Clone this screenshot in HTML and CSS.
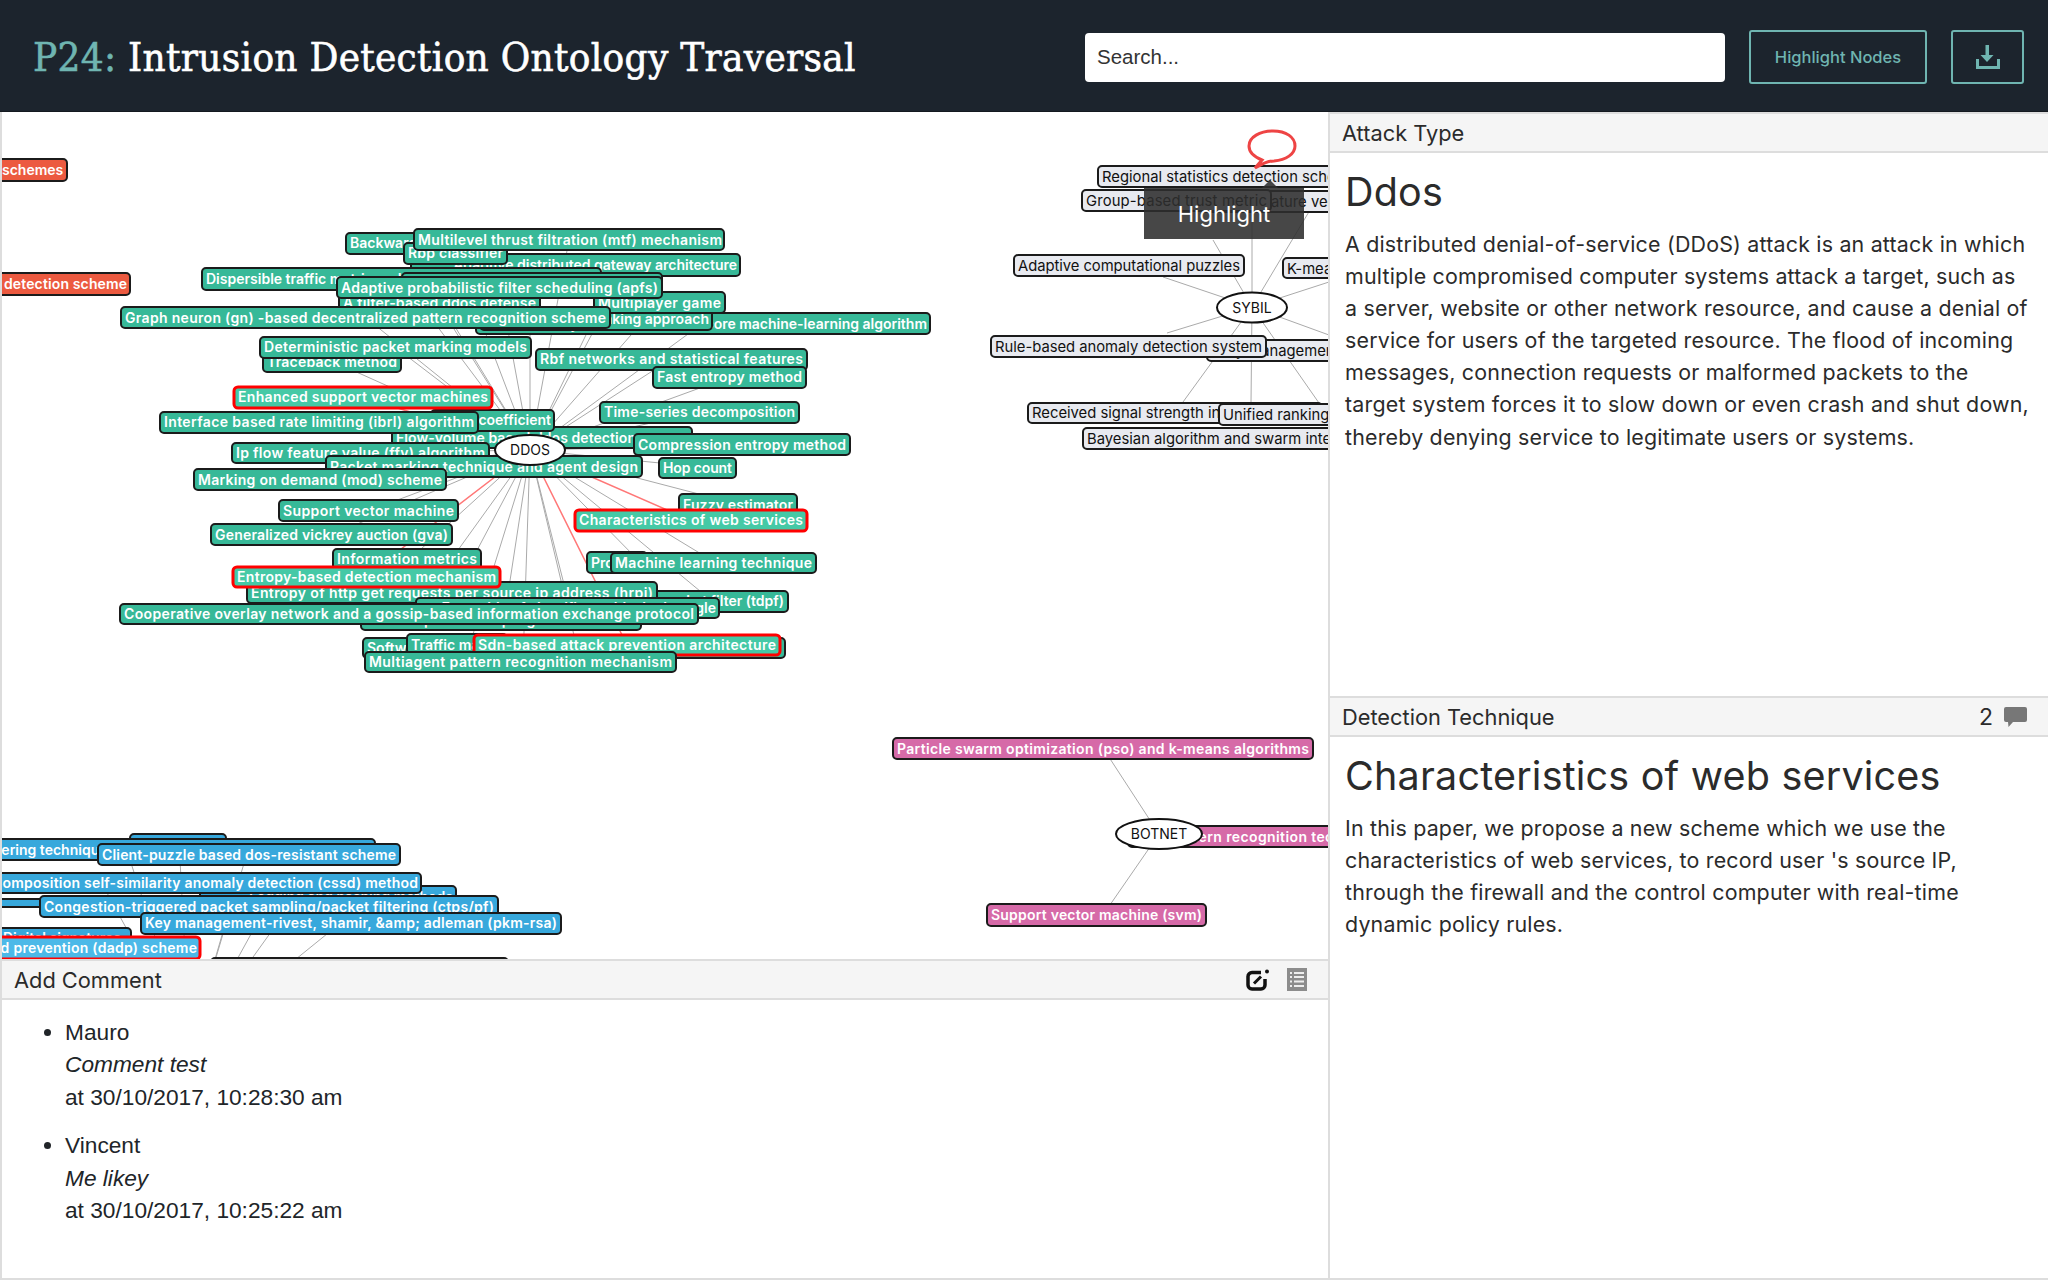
FILE: index.html
```html
<!DOCTYPE html>
<html lang="en">
<head>
<meta charset="utf-8">
<title>P24: Intrusion Detection Ontology Traversal</title>
<link rel="stylesheet" href="styles.css">
</head>
<body>
<header class="topbar">
  <h1 class="title"><span class="title-id">P24:</span> Intrusion Detection Ontology Traversal</h1>
  <div class="tools">
    <input class="search" type="text" placeholder="Search...">
    <button class="btn btn-text" type="button">Highlight Nodes</button>
    <button class="btn btn-icon" type="button" aria-label="Download">
      <svg class="icon-download" viewBox="0 0 24 25" width="24" height="25"><path d="M9.500 0h3.500v10h4.500l-6.500 7-6.500-7h5z"/><path class="tray" d="M1.500 14v8.500h21V14"/></svg>
    </button>
  </div>
</header>
<main class="layout">
  <section class="left">
    <div class="graph">
      <svg class="graph-svg" viewBox="2 112 1326 847" width="1326" height="847">
        <path class="edge" d="M530 450L400 243M530 450L569 240M530 450L455 253M530 450L620 265M530 450L401 278M530 450L530 283M530 450L500 287M530 450L440 302M530 450L660 302M530 450L365 317M530 450L600 319M530 450L703 323M530 450L395 347M530 450L332 361M530 450L671 359M530 450L730 377M530 450L320 422M530 450L492 420M530 450L700 412M530 450L745 445M530 450L363 453M530 450L700 467M530 450L323 480M530 450L371 510M530 450L741 505M530 450L334 534M530 450L410 559M530 450L640 562M530 450L716 563M530 450L455 592M530 450L712 601M530 450L570 608M530 450L412 614M530 450L504 620M530 450L577 648M530 450L470 644M530 450L523 662"/>
        <path class="edge edge-hl" d="M530 450L363 397M530 450L690 520M530 450L366 576M530 450L627 645"/>
        <path class="edge" d="M1252 307L1252 200M1252 307L1213 240M1252 307L1322 190M1252 307L1163 277M1252 307L1329 282M1252 307L1167 333M1252 307L1329 335M1252 307L1183 402M1252 307L1251 403M1252 307L1319 403"/>
        <path class="edge" d="M1159 834L1103 748M1159 834L1103 915"/>
        <path class="edge" d="M190 1045L256 925M190 1045L276 925M190 1045L338 925M190 1045L225 925M190 1045L100 880M190 1045L130 860M190 1045L180 860M190 1045L245 860"/>

        <g class="nodes red">
          <rect x="-60" y="159" width="127" height="22"/><text x="2" y="175">schemes</text>
          <rect x="-100" y="273" width="230" height="22"/><text x="4" y="289" textLength="123">detection scheme</text>
        </g>

        <g class="nodes green">
          <rect x="346" y="233" width="154" height="21"/><text x="350" y="248">Backward propagation</text>
          <rect x="411" y="254" width="329" height="22"/><text x="737" y="270" class="end">Adaptive distributed gateway architecture</text>
          <rect x="404" y="243" width="103" height="21"/><text x="408" y="258" textLength="95">Rbp classifier</text>
          <rect x="414" y="229" width="310" height="21"/><text x="418" y="245" textLength="304">Multilevel thrust filtration (mtf) mechanism</text>
          <rect x="202" y="268" width="399" height="22"/><text x="206" y="284">Dispersible traffic matrix and weight-based approach</text>
          <rect x="402" y="273" width="260" height="22"/><text x="410" y="289">Weighted fair queue mechanism</text>
          <rect x="339" y="292" width="201" height="22"/><text x="343" y="308" textLength="193">A filter-based ddos defense</text>
          <rect x="476" y="313" width="454" height="21"/><text x="927" y="329" class="end">Hybrid rule induction core machine-learning algorithm</text>
          <rect x="480" y="309" width="232" height="21"/><text x="709" y="324" class="end">Traffic fingerprinting and ranking approach</text>
          <rect x="594" y="292" width="131" height="21"/><text x="598" y="308" textLength="123">Multiplayer game</text>
          <rect x="337" y="277" width="325" height="21"/><text x="341" y="293" textLength="317">Adaptive probabilistic filter scheduling (apfs)</text>
          <rect x="121" y="307" width="489" height="21"/><text x="125" y="323" textLength="481">Graph neuron (gn) -based decentralized pattern recognition scheme</text>
          <rect x="263" y="351" width="138" height="21"/><text x="267" y="367" textLength="130">Traceback method</text>
          <rect x="260" y="337" width="271" height="21"/><text x="264" y="352" textLength="263">Deterministic packet marking models</text>
          <rect x="536" y="349" width="271" height="21"/><text x="540" y="364" textLength="263">Rbf networks and statistical features</text>
          <rect x="653" y="367" width="153" height="21"/><text x="657" y="382" textLength="145">Fast entropy method</text>
          <rect x="600" y="402" width="199" height="21"/><text x="604" y="417" textLength="191">Time-series decomposition</text>
          <rect x="392" y="427" width="300" height="21"/><text x="396" y="443" textLength="240">Flow-volume based ddos detection</text>
          <rect x="431" y="410" width="123" height="21"/><text x="551" y="425" class="end">Gini coefficient</text>
          <rect class="hl" x="234" y="387" width="258" height="21"/><text x="238" y="402" textLength="250">Enhanced support vector machines</text>
          <rect x="160" y="412" width="318" height="21"/><text x="164" y="427" textLength="310">Interface based rate limiting (ibrl) algorithm</text>
          <g class="shifted">
            <rect x="637" y="434" width="216" height="21"/><text x="641" y="450" textLength="208">Compression entropy method</text>
            <rect x="235" y="443" width="257" height="20"/><text x="239" y="458" textLength="249">Ip flow feature value (ffv) algorithm</text>
            <rect x="662" y="458" width="77" height="20"/><text x="666" y="473" textLength="69">Hop count</text>
            <rect x="329" y="456" width="316" height="21"/><text x="333" y="472" textLength="308">Packet marking technique and agent design</text>
            <rect x="197" y="469" width="252" height="21"/><text x="201" y="485" textLength="244">Marking on demand (mod) scheme</text>
            <rect x="282" y="500" width="179" height="21"/><text x="286" y="516" textLength="171">Support vector machine</text>
            <rect x="682" y="494" width="118" height="21"/><text x="686" y="510" textLength="110">Fuzzy estimator</text>
            <rect class="hl" x="578" y="510" width="232" height="21"/><text x="582" y="525" textLength="224">Characteristics of web services</text>
            <rect x="214" y="524" width="241" height="21"/><text x="218" y="540" textLength="233">Generalized vickrey auction (gva)</text>
            <rect x="336" y="549" width="148" height="21"/><text x="340" y="564" textLength="140">Information metrics</text>
            <rect x="590" y="552" width="60" height="21"/><text x="594" y="568">Proactive</text>
            <rect x="614" y="553" width="205" height="20"/><text x="618" y="568" textLength="197">Machine learning technique</text>
            <rect x="633" y="591" width="158" height="21"/><text x="787" y="606" class="end">Two-dimensional packet filter (tdpf)</text>
            <rect x="250" y="582" width="410" height="21"/><text x="254" y="598" textLength="402">Entropy of http get requests per source ip address (hrpi)</text>
            <rect class="hl" x="236" y="567" width="267" height="20"/><text x="240" y="582" textLength="259">Entropy-based detection mechanism</text>
            <rect x="419" y="598" width="303" height="20"/><text x="719" y="613" class="end">Ensemble of classifiers with single angle</text>
            <rect x="364" y="610" width="280" height="20"/><text x="368" y="625">Random packet sampling scheme</text>
            <rect x="123" y="604" width="578" height="20"/><text x="127" y="619" textLength="570">Cooperative overlay network and a gossip-based information exchange protocol</text>
            <rect x="366" y="638" width="422" height="20"/><text x="370" y="653">Software defined networking controller</text>
            <rect x="410" y="634" width="100" height="20"/><text x="414" y="650">Traffic matrix</text>
            <rect class="hl" x="477" y="635" width="306" height="20"/><text x="481" y="650" textLength="298">Sdn-based attack prevention architecture</text>
            <rect x="368" y="652" width="311" height="20"/><text x="372" y="667" textLength="303">Multiagent pattern recognition mechanism</text>
          </g>
        </g>

        <g class="nodes pale">
          <rect x="1098" y="166" width="300" height="21"/><text x="1102" y="182">Regional statistics detection scheme</text>
          <rect x="1200" y="191" width="200" height="21"/><text x="1240" y="207">Signature vector</text>
          <rect x="1082" y="190" width="189" height="21"/><text x="1086" y="206" textLength="181">Group-based trust metric</text>
          <rect x="1014" y="255" width="230" height="21"/><text x="1018" y="271" textLength="222">Adaptive computational puzzles</text>
          <rect x="1283" y="258" width="100" height="20"/><text x="1287" y="274">K-means</text>
          <rect x="1207" y="340" width="200" height="21"/><text x="1218" y="356">Key management</text>
          <rect x="991" y="336" width="275" height="21"/><text x="995" y="352" textLength="267">Rule-based anomaly detection system</text>
          <rect x="1028" y="403" width="294" height="20"/><text x="1032" y="418">Received signal strength indicator</text>
          <rect x="1219" y="404" width="200" height="21"/><text x="1223" y="420">Unified ranking</text>
          <rect x="1083" y="428" width="320" height="21"/><text x="1087" y="444">Bayesian algorithm and swarm intelligence</text>
        </g>
        <path class="bubble" d="M1255 168L1262 160C1252 156 1249 150 1249 146C1249 137 1260 131 1273 131C1286 131 1295 137 1295 146C1295 154 1286 160 1274 161C1268 161 1264 163 1255 168Z"/>

        <g class="nodes pink">
          <rect x="893" y="738" width="420" height="21"/><text x="897" y="754" textLength="412">Particle swarm optimization (pso) and k-means algorithms</text>
          <rect x="1128" y="826" width="280" height="21"/><text x="1120" y="842" textLength="262">Traffic pattern recognition technique</text>
          <rect x="987" y="904" width="219" height="22"/><text x="991" y="920" textLength="211">Support vector machine (svm)</text>
        </g>

        <g class="nodes blue">
          <rect x="130" y="834" width="96" height="20"/><text x="134" y="849">Puzzle</text>
          <rect x="-100" y="839" width="475" height="21"/><text x="-66" y="855">Packet filtering technique</text>
          <rect x="98" y="844" width="302" height="21"/><text x="102" y="860" textLength="294">Client-puzzle based dos-resistant scheme</text>
          <rect x="200" y="886" width="256" height="21"/><text x="453" y="902" class="end">Logging and hashing methods</text>
          <rect x="-100" y="873" width="521" height="20"/><text x="-8" y="888" textLength="426">Composition self-similarity anomaly detection (cssd) method</text>
          <rect x="-60" y="899" width="104" height="8"/>
          <rect x="40" y="896" width="458" height="21"/><text x="44" y="912" textLength="450">Congestion-triggered packet sampling/packet filtering (ctps/pf)</text>
          <rect x="-60" y="928" width="191" height="21"/><text x="3" y="943">Digital signatures</text>
          <rect x="141" y="913" width="420" height="21"/><text x="145" y="928" textLength="412">Key management-rivest, shamir, &amp;amp; adleman (pkm-rsa)</text>
          <rect x="211" y="958" width="297" height="21"/>
          <rect class="hl" x="-160" y="937" width="360" height="22"/><text x="-88" y="953" textLength="285">Detection and prevention (dadp) scheme</text>
        </g>

        <g class="hub">
          <ellipse cx="530" cy="450" rx="35" ry="15"/><text x="530" y="455">DDOS</text>
          <ellipse cx="1252" cy="307.500" rx="35" ry="15"/><text x="1252" y="313">SYBIL</text>
          <ellipse cx="1159" cy="834" rx="43" ry="15"/><text x="1159" y="839">BOTNET</text>
        </g>
      </svg>
      <div class="tooltip">Highlight</div>
    </div>
    <div class="bar comment-bar">
      <span>Add Comment</span>
      <div class="bar-tools">
        <svg class="icon-edit" viewBox="0 0 24 22" width="24" height="22"><path class="edit-box" d="M15 3.500H6a4 4 0 0 0-4 4v8.500a4 4 0 0 0 4 4h9a4 4 0 0 0 4-4V10"/><path class="edit-pen" d="M8 14.500l7-7"/><circle cx="21" cy="2.500" r="2"/></svg>
        <svg class="icon-list" viewBox="0 0 20 23" width="20" height="23"><rect x="0" y="0" width="20" height="23"/><path d="M3 5h2M7 5h10M3 9h2M7 9h10M3 13.500h2M7 13.500h10M3 18h2M7 18h10"/></svg>
      </div>
    </div>
    <ul class="comments">
      <li>Mauro<br><em>Comment test</em><br>at 30/10/2017, 10:28:30 am</li>
      <li>Vincent<br><em>Me likey</em><br>at 30/10/2017, 10:25:22 am</li>
    </ul>
  </section>
  <aside class="right">
    <section class="panel panel-top">
      <div class="bar"><span>Attack Type</span></div>
      <div class="panel-body">
        <h2>Ddos</h2>
        <p>A distributed denial-of-service (DDoS) attack is an attack in which multiple compromised computer systems attack a target, such as a server, website or other network resource, and cause a denial of service for users of the targeted resource. The flood of incoming messages, connection requests or malformed packets to the target system forces it to slow down or even crash and shut down, thereby denying service to legitimate users or systems.</p>
      </div>
    </section>
    <section class="panel">
      <div class="bar"><span>Detection Technique</span>
        <div class="bar-count"><span class="count">2</span>
          <svg class="icon-bubble" viewBox="0 0 23 20" width="23" height="20"><path d="M2 0h19a2 2 0 0 1 2 2v11a2 2 0 0 1-2 2H9l-4.500 5-.5-5H2a2 2 0 0 1-2-2V2a2 2 0 0 1 2-2z"/></svg>
        </div>
      </div>
      <div class="panel-body">
        <h2>Characteristics of web services</h2>
        <p>In this paper, we propose a new scheme which we use the characteristics of web services, to record user 's source IP, through the firewall and the control computer with real-time dynamic policy rules.</p>
      </div>
    </section>
  </aside>
</main>
</body>
</html>
```
FILE: styles.css
```css
* { box-sizing: border-box; }
html, body { margin: 0; height: 100%; }
body {
  background: #fff;
  color: #212529;
  font-family: "Liberation Sans", Arial, sans-serif;
  overflow: hidden;
}
.topbar {
  display: flex;
  align-items: center;
  justify-content: space-between;
  height: 112px;
  padding: 3px 24px 0 33px;
  background: #1c242d;
  border-bottom: 1px solid #14191f;
}
.title {
  margin: 0;
  color: #fff;
  font-family: "DejaVu Serif Condensed", "DejaVu Serif", serif;
  font-stretch: condensed;
  font-size: 40px;
  font-weight: 400;
  letter-spacing: 0.3px;
  -webkit-text-stroke: 0.6px currentColor;
  white-space: nowrap;
}
.title-id { color: #6fb5b1; }
.tools { display: flex; align-items: center; }
.search {
  width: 640px;
  height: 49px;
  padding: 0 12px;
  margin-right: 24px;
  border: 0;
  border-radius: 4px;
  background: #fff;
  font-family: "Liberation Sans", Arial, sans-serif;
  font-size: 20.500px;
  color: #333;
}
.search::placeholder { color: #333; opacity: 1; }
.btn {
  height: 54px;
  border: 2px solid #6fb5b1;
  border-radius: 3px;
  background: transparent;
  color: #6fb5b1;
  font-family: Inter, sans-serif;
  display: flex;
  align-items: center;
  justify-content: center;
}
.btn-text { width: 178px; margin-right: 24px; font-size: 16.500px; font-weight: 500; }
.btn-icon { width: 73px; }
.icon-download path { fill: #6fb5b1; }
.icon-download .tray { fill: none; stroke: #6fb5b1; stroke-width: 3; }

.layout {
  display: grid;
  grid-template-columns: 1328px 1fr;
  height: 1168px;
  border-bottom: 2px solid #ddd;
}
.left { display: flex; flex-direction: column; border-left: 2px solid #ddd; min-width: 0; }
.graph { position: relative; height: 847px; overflow: hidden; }
.graph-svg { display: block; }
.edge { fill: none; stroke: #aaa; stroke-width: 1; }
.edge-hl { stroke: #f77; stroke-width: 1.500; }
.nodes rect { stroke: #1b1b1b; stroke-width: 2; rx: 4px; ry: 4px; }
.nodes text { font-family: Inter, sans-serif; font-size: 14px; font-weight: 600; fill: #fff; }
.nodes .end { text-anchor: end; }
.nodes rect.hl { stroke: #f00; stroke-width: 3; }
.shifted { transform: translateX(-3px); }
.green rect { fill: #37b998; }
.green rect.hl { fill: #45c9a6; }
.red rect { fill: #ec5a40; }
.pink rect { fill: #d66aa8; }
.blue rect { fill: #37a8dc; }
.blue rect.hl { fill: #4cb9e8; }
.pale rect { fill: #e8eaf0; }
.nodes.pale text { fill: #111; font-weight: 400; font-size: 14.800px; }
.hub ellipse { fill: #fff; stroke: #111; stroke-width: 2; }
.hub text { font-family: Inter, sans-serif; font-size: 14px; fill: #111; text-anchor: middle; }
.bubble { fill: none; stroke: #ee4444; stroke-width: 3; }
.tooltip {
  position: absolute;
  left: 1142px;
  top: 76px;
  width: 160px;
  height: 51px;
  display: flex;
  align-items: center;
  justify-content: center;
  background: rgba(45, 45, 45, 0.88);
  color: #fff;
  font-family: Inter, sans-serif;
  font-size: 22px;
}
.tooltip::before {
  content: "";
  position: absolute;
  left: 118px;
  top: -8px;
  border: 8px solid transparent;
  border-top: 0;
  border-bottom-color: rgba(45, 45, 45, 0.88);
}

.bar {
  display: flex;
  align-items: center;
  justify-content: space-between;
  height: 41px;
  padding: 0 12px;
  background: #f5f5f5;
  border-top: 2px solid #ddd;
  border-bottom: 2px solid #ddd;
  color: #2b2b2b;
  font-family: Inter, sans-serif;
  font-size: 21.800px;
}
.bar-tools { display: flex; align-items: center; gap: 17px; margin-right: 9px; }
.icon-edit .edit-box { fill: none; stroke: #111; stroke-width: 3.500; }
.icon-edit .edit-pen { fill: none; stroke: #111; stroke-width: 3; }
.icon-edit circle { fill: #111; }
.icon-list rect { fill: #8c8c8c; }
.icon-list path { fill: none; stroke: #eee; stroke-width: 2; }
.bar-count { display: flex; align-items: center; gap: 11px; margin-right: 10px; }
.count { font-size: 23px; }
.icon-bubble path { fill: #777; }
.comments { margin: 16px 0 0; padding-left: 63px; font-size: 22.700px; line-height: 32.400px; }
.comments li { margin-bottom: 16px; }

.right { display: flex; flex-direction: column; border-left: 2px solid #ddd; min-width: 0; }
.panel-top { height: 584px; }
.right .bar { padding-left: 12px; margin-right: -1px; }
.panel-body { padding: 16px 15px 0 15px; }
.panel-body h2 {
  margin: 0 0 13px;
  font-family: Inter, sans-serif;
  font-size: 39.500px;
  font-weight: 400;
  letter-spacing: 0.2px;
  line-height: 46px;
  color: #2b2b2b;
}
.panel-body p {
  margin: 0;
  font-family: Inter, sans-serif;
  font-size: 21.400px;
  letter-spacing: 0.2px;
  line-height: 32.100px;
  color: #2b2b2b;
}
```
